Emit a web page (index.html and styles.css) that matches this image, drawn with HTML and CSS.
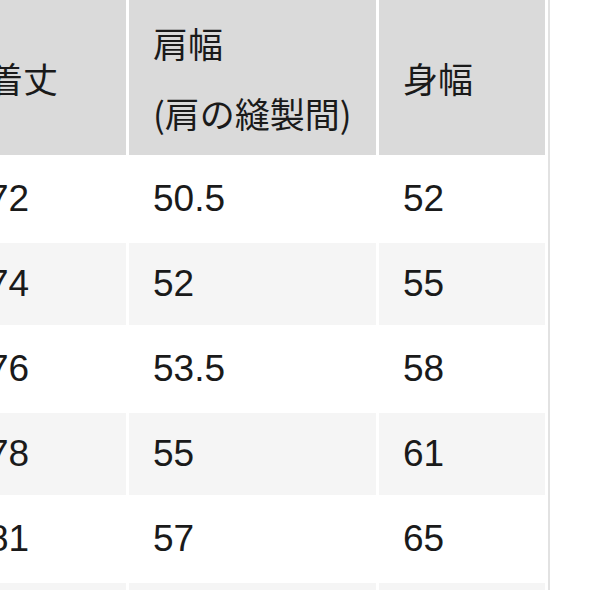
FILE: index.html
```html
<!DOCTYPE html>
<html lang="ja">
<head>
<meta charset="utf-8">
<title>サイズ表</title>
<link rel="stylesheet" href="styles.css">
</head>
<body>
<div class="wrap">
<table class="size-table">
  <colgroup>
    <col class="c1">
    <col class="c2">
    <col class="c3">
  </colgroup>
  <thead>
    <tr>
      <th>着丈</th>
      <th>肩幅<br>(肩の縫製間)</th>
      <th>身幅</th>
    </tr>
  </thead>
  <tbody>
    <tr><td>72</td><td>50.5</td><td>52</td></tr>
    <tr><td>74</td><td>52</td><td>55</td></tr>
    <tr><td>76</td><td>53.5</td><td>58</td></tr>
    <tr><td>78</td><td>55</td><td>61</td></tr>
    <tr><td>81</td><td>57</td><td>65</td></tr>
    <tr><td>84</td><td>59</td><td>69</td></tr>
  </tbody>
</table>
</div>
</body>
</html>
```

FILE: styles.css
```css
html, body {
  margin: 0;
  padding: 0;
  background: #ffffff;
}

body {
  width: 590px;
  height: 590px;
  overflow: hidden;
  font-family: "Liberation Sans", "Noto Sans CJK JP", sans-serif;
  color: #1a1a1a;
}

.wrap {
  margin-left: -39px;
  margin-top: -3px;
}

.size-table {
  table-layout: fixed;
  width: 588px;
  border-collapse: separate;
  border-spacing: 3px;
  border-right: 2px solid #e2e2e2;
}

.c1 { width: 162px; }
.c2 { width: 247px; }
.c3 { width: 166px; }

.size-table th,
.size-table td {
  box-sizing: border-box;
  padding: 0 0 0 24px;
  text-align: left;
  vertical-align: middle;
  white-space: nowrap;
}

.size-table th {
  height: 155px;
  background: #dadada;
  font-family: "Noto Sans CJK JP", "Liberation Sans", sans-serif;
  font-weight: 400;
  font-size: 35px;
  line-height: 70px;
}

.size-table td {
  height: 82px;
  font-size: 37px;
  line-height: 40px;
}

.size-table tbody tr:nth-child(even) td {
  background: #f5f5f5;
}
```
